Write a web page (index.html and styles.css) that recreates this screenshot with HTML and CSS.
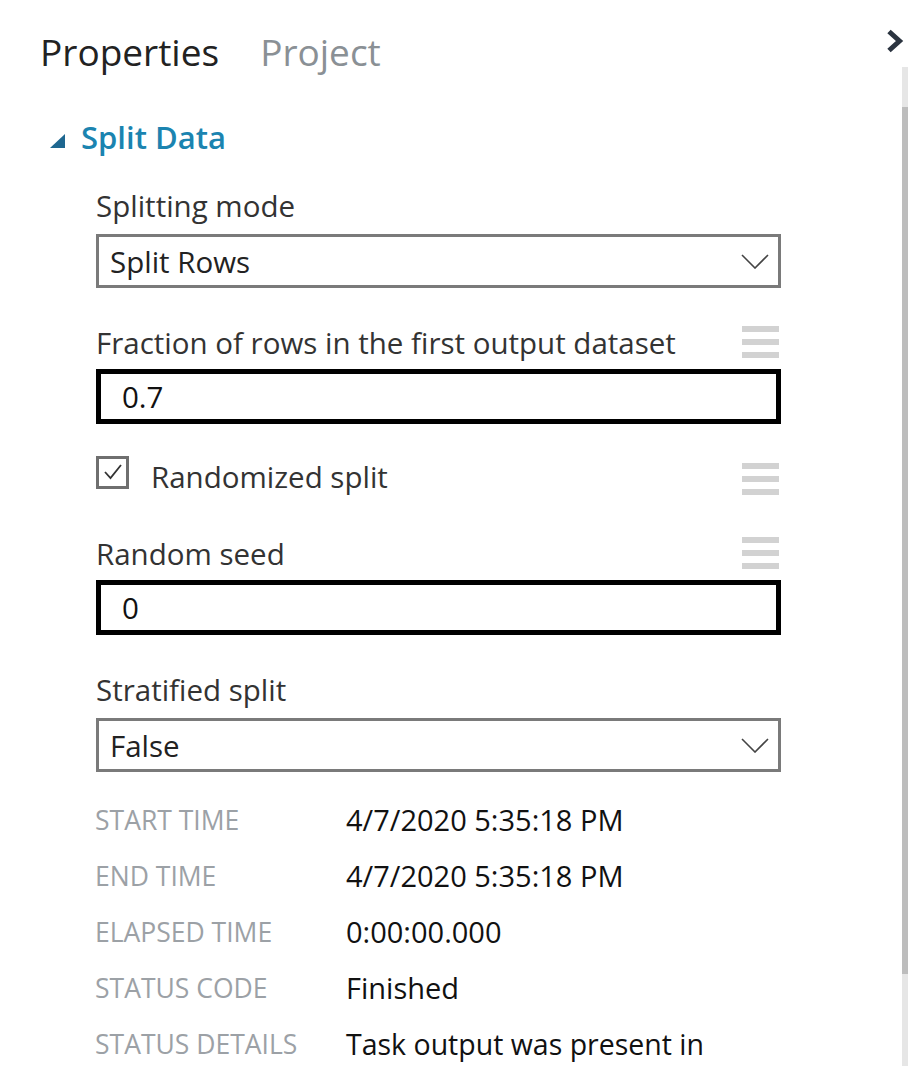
FILE: index.html
```html
<!DOCTYPE html>
<html lang="en">
<head>
<meta charset="utf-8">
<title>Properties</title>
<link rel="stylesheet" href="styles.css">
</head>
<body>
<div class="page">
  <main class="content">
    <nav class="tabs">
      <span class="tab tab-active">Properties</span>
      <span class="tab">Project</span>
    </nav>

    <section class="module">
      <h2 class="module-head">
        <svg class="expander" width="16" height="14" viewBox="0 0 16 14"><polygon points="15,0 15,14 0,14" fill="#1e6790"/></svg>
        <span>Split Data</span>
      </h2>

      <div class="fields">
        <div class="field field-first">
          <div class="label-row"><span class="label">Splitting mode</span></div>
          <div class="select">
            <span>Split Rows</span>
            <svg class="caret" width="28" height="15" viewBox="0 0 28 15"><polyline points="1,1 14,14 27,1" fill="none" stroke="#444" stroke-width="1.6"/></svg>
          </div>
        </div>

        <div class="field">
          <div class="label-row">
            <span class="label">Fraction of rows in the first output dataset</span>
            <span class="handle"><i></i><i></i><i></i></span>
          </div>
          <div class="input">0.7</div>
        </div>

        <div class="field field-check">
          <div class="label-row">
            <span class="check-wrap">
              <span class="checkbox">
                <svg width="26" height="26" viewBox="0 0 26 26"><polyline points="5,13 10.5,19 21,6" fill="none" stroke="#333" stroke-width="1.8"/></svg>
              </span>
              <span class="label label-check">Randomized split</span>
            </span>
            <span class="handle handle-check"><i></i><i></i><i></i></span>
          </div>
        </div>

        <div class="field field-seed">
          <div class="label-row">
            <span class="label">Random seed</span>
            <span class="handle"><i></i><i></i><i></i></span>
          </div>
          <div class="input">0</div>
        </div>

        <div class="field">
          <div class="label-row"><span class="label">Stratified split</span></div>
          <div class="select">
            <span>False</span>
            <svg class="caret" width="28" height="15" viewBox="0 0 28 15"><polyline points="1,1 14,14 27,1" fill="none" stroke="#444" stroke-width="1.6"/></svg>
          </div>
        </div>
      </div>

      <dl class="info">
        <dt>START TIME</dt><dd>4/7/2020 5:35:18 PM</dd>
        <dt>END TIME</dt><dd>4/7/2020 5:35:18 PM</dd>
        <dt>ELAPSED TIME</dt><dd>0:00:00.000</dd>
        <dt>STATUS CODE</dt><dd>Finished</dd>
        <dt>STATUS DETAILS</dt><dd class="details">Task output was present in</dd>
      </dl>
    </section>
  </main>

  <aside class="rail">
    <button class="collapse" aria-label="Collapse">
      <svg width="18" height="24" viewBox="0 0 18 24"><polyline points="3,2.5 13.5,12 3,21.5" fill="none" stroke="#2b3440" stroke-width="5"/></svg>
    </button>
    <div class="track"><div class="thumb"></div></div>
  </aside>
</div>
</body>
</html>
```

FILE: styles.css
```css
html, body {
  margin: 0;
  padding: 0;
  background: #ffffff;
}

body {
  font-family: "Open Sans", "Noto Sans", sans-serif;
  color: #333;
}

.page {
  display: flex;
  height: 1066px;
  overflow: hidden;
}

.content {
  flex: 1;
  min-width: 0;
}

.tabs {
  display: flex;
  gap: 41px;
  padding: 30px 0 0 40px;
  height: 44px;
  line-height: 44px;
  font-size: 37px;
}

.tab {
  color: #8a9095;
}

.tab-active {
  color: #222;
}

.module-head {
  display: flex;
  align-items: center;
  gap: 15px;
  margin: 43px 0 0 50px;
  height: 40px;
  font-size: 31px;
  font-weight: 600;
  color: #1b84b0;
}

.expander {
  margin-top: 8px;
}

.fields {
  margin-left: 96px;
  width: 685px;
  display: flex;
  flex-direction: column;
}

.field {
  margin-top: 36px;
}

.field-first {
  margin-top: 30px;
}

.field-check {
  margin-top: 30px;
}

.field-seed {
  margin-top: 45px;
}

.label-row {
  display: flex;
  align-items: center;
  justify-content: space-between;
  height: 36px;
  font-size: 29.5px;
  color: #333;
}

.label-check {
  margin-top: 8px;
}

.handle {
  display: flex;
  flex-direction: column;
  gap: 7px;
  width: 37px;
  margin-right: 2px;
}

.handle-check {
  margin-top: 14px;
}

.handle i {
  display: block;
  height: 6px;
  background: #d2d2d2;
}

.check-wrap {
  display: flex;
  align-items: center;
  gap: 22px;
}

.checkbox {
  box-sizing: border-box;
  width: 33px;
  height: 33px;
  border: 3px solid #6f6f6f;
  display: flex;
  align-items: center;
  justify-content: center;
}

.select {
  box-sizing: border-box;
  margin-top: 11px;
  height: 54px;
  border: 3px solid #7a7a7a;
  display: flex;
  align-items: center;
  justify-content: space-between;
  padding: 0 9px 0 11px;
  font-size: 29.5px;
  color: #222;
}

.input {
  box-sizing: border-box;
  margin-top: 9px;
  height: 55px;
  border: 5px solid #000;
  display: flex;
  align-items: center;
  padding: 0 21px;
  font-size: 29.5px;
  color: #111;
}

.info {
  display: grid;
  grid-template-columns: 251px 1fr;
  margin: 20px 0 0 95px;
}

.info dt,
.info dd {
  margin: 0;
  height: 56px;
  line-height: 56px;
  white-space: nowrap;
}

.info dt {
  font-size: 26.5px;
  color: #9ca1a6;
}

.info dd {
  font-size: 29px;
  color: #111;
}

.info dd.details {
  font-size: 28.5px;
}

.rail {
  width: 22px;
  display: flex;
  flex-direction: column;
  align-items: flex-end;
}

.collapse {
  display: block;
  box-sizing: border-box;
  width: 22px;
  height: 67px;
  padding: 14px 0 0 0;
  margin: 0;
  border: 0;
  background: none;
}

.collapse svg {
  display: block;
}

.track {
  flex: 1;
  width: 6px;
  background: #e6e6e6;
  padding-top: 40px;
}

.thumb {
  height: 867px;
  background: #bdbdbd;
}
```
